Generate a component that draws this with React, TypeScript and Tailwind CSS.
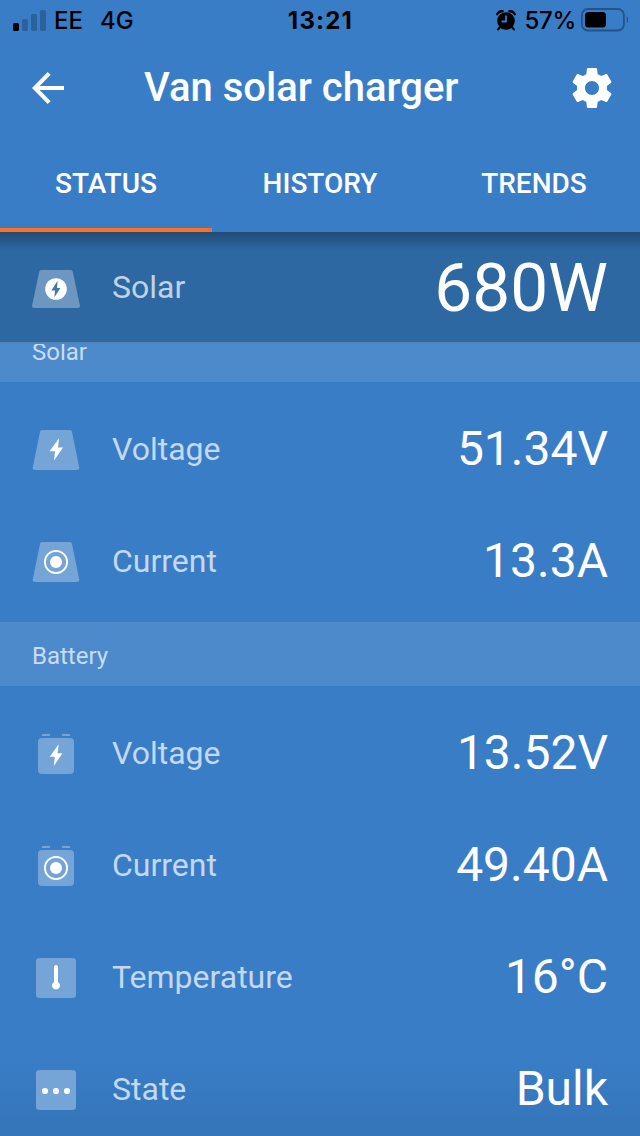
import type { ReactNode } from "react"

const tabs = ["STATUS", "HISTORY", "TRENDS"]

function PanelIcon({ children }: { children: ReactNode }) {
  return (
    <svg viewBox="0 0 48 48" className="h-12 w-12" aria-hidden="true">
      <path
        d="M10.2 4h27.6a2.2 2.2 0 0 1 2.2 1.8l7.2 35.4a2.4 2.4 0 0 1-2.3 2.8H3.1a2.4 2.4 0 0 1-2.3-2.8L8 5.8A2.2 2.2 0 0 1 10.2 4Z"
        fill="#75a5d7"
      />
      {children}
    </svg>
  )
}

function BatteryIcon({ children }: { children: ReactNode }) {
  return (
    <svg viewBox="0 0 48 48" className="h-12 w-12" aria-hidden="true">
      <path d="M10 4h8v2h-8zM30 4h8v2h-8z" fill="#75a5d7" />
      <rect x="6" y="8" width="36" height="36" rx="4" fill="#75a5d7" />
      {children}
    </svg>
  )
}

function SquareIcon({ children }: { children: ReactNode }) {
  return (
    <svg viewBox="0 0 48 48" className="h-12 w-12" aria-hidden="true">
      <rect x="4" y="4" width="40" height="40" rx="3.5" fill="#75a5d7" />
      {children}
    </svg>
  )
}

function Target({ cy }: { cy: number }) {
  return (
    <>
      <circle cx="24" cy={cy} r="11.1" fill="none" stroke="#fff" strokeWidth="1.8" />
      <circle cx="24" cy={cy} r="6" fill="#fff" />
    </>
  )
}

const solarRows = [
  {
    label: "Voltage",
    value: "51.34V",
    icon: (
      <PanelIcon>
        <path d="M27 12.2 17.6 25.2H23L22 34.4 31 21.4H26Z" fill="#fff" />
      </PanelIcon>
    ),
  },
  {
    label: "Current",
    value: "13.3A",
    icon: (
      <PanelIcon>
        <Target cy={24} />
      </PanelIcon>
    ),
  },
]

const batteryRows = [
  {
    label: "Voltage",
    value: "13.52V",
    icon: (
      <BatteryIcon>
        <path d="M26.6 14.2 17.8 26.8H22.8L21.8 36 30.4 23.2H25.6Z" fill="#fff" />
      </BatteryIcon>
    ),
  },
  {
    label: "Current",
    value: "49.40A",
    icon: (
      <BatteryIcon>
        <Target cy={26} />
      </BatteryIcon>
    ),
  },
  {
    label: "Temperature",
    value: "16°C",
    icon: (
      <SquareIcon>
        <path d="M22 13a2 2 0 0 1 4 0v15a4 4 0 1 1-4 0Z" fill="#fff" />
      </SquareIcon>
    ),
  },
  {
    label: "State",
    value: "Bulk",
    icon: (
      <SquareIcon>
        <circle cx="13" cy="25" r="3.1" fill="#fff" />
        <circle cx="24" cy="25" r="3.1" fill="#fff" />
        <circle cx="35" cy="25" r="3.1" fill="#fff" />
      </SquareIcon>
    ),
  },
]

function Row({ label, value, icon }: { label: string; value: string; icon: ReactNode }) {
  return (
    <div className="flex h-28 items-center px-8 pt-1.5">
      <div className="pt-0.5">{icon}</div>
      <span className="ml-8 flex-1 text-[32px] text-[#c4d8ef]">{label}</span>
      <span className="text-5xl text-white">{value}</span>
    </div>
  )
}

function StatusBar() {
  return (
    <div className="flex h-10 shrink-0 items-center justify-between pr-3 pl-[13px] font-['Inter',sans-serif] text-black">
      <div className="flex w-[200px] items-center">
        <svg viewBox="0 0 33 21" className="h-[21px] w-[33px]" aria-hidden="true">
          <rect x="0" y="13" width="6" height="8" rx="1.5" />
          <rect x="9" y="9" width="6" height="12" rx="1.5" fill="#2c619b" />
          <rect x="18" y="4" width="6" height="17" rx="1.5" fill="#2c619b" />
          <rect x="27" y="0" width="6" height="21" rx="1.5" fill="#2c619b" />
        </svg>
        <span className="ml-2 pt-0.5 text-2xl font-medium">EE</span>
        <span className="ml-[17px] pt-0.5 text-2xl font-medium">4G</span>
      </div>
      <span className="pt-0.5 text-2xl font-bold tracking-[1.2px]">13:21</span>
      <div className="flex w-[200px] items-center justify-end">
        <svg viewBox="0 0 20 21" className="h-[21px] w-5" aria-hidden="true">
          <circle cx="10" cy="11" r="8.8" />
          <path d="M4.5 16.5 2 19.5M15.5 16.5l2.5 3" stroke="#000" strokeWidth="2" strokeLinecap="round" />
          <path d="M1.2 4.2Q3 .9 6.6 1.2M18.8 4.2Q17 .9 13.4 1.2" fill="none" stroke="#000" strokeWidth="2.4" strokeLinecap="round" />
          <path d="M10 5.5V11.5H5.5" fill="none" stroke="#397dc6" strokeWidth="1.8" />
        </svg>
        <span className="ml-[9px] pt-0.5 text-2xl font-medium tracking-[-0.3px]">57%</span>
        <svg viewBox="0 0 48 24" className="ml-1 h-6 w-12" aria-hidden="true">
          <rect x="1.9" y="1" width="42" height="21.5" rx="6" fill="none" stroke="#265383" strokeWidth="1.8" />
          <rect x="5" y="4" width="21" height="15.5" rx="3.5" />
          <path d="M46.8 8.5q1.8 1 1.8 3.3T46.8 15Z" fill="#265383" />
        </svg>
      </div>
    </div>
  )
}

export default function App() {
  return (
    <div className="flex h-[1136px] w-[640px] flex-col overflow-hidden bg-[#397dc6] bg-linear-to-b from-[#397dc6] from-[93.5%] to-[#3474b8] font-['Roboto',sans-serif] leading-none">
      <StatusBar />

      <header className="flex h-24 shrink-0 items-center px-8 text-white">
        <svg viewBox="0 0 32 32" className="h-8 w-8" aria-hidden="true">
          <path d="M32 16H3M17.2 1.4 2.8 16l14.4 14.6" fill="none" stroke="currentColor" strokeWidth="4" />
        </svg>
        <h1 className="ml-20 flex-1 text-[40px] font-medium">Van solar charger</h1>
        <svg viewBox="2 2 20 20" className="-mr-1 h-10 w-10" aria-hidden="true">
          <path
            fill="currentColor"
            d="M19.43 12.98c.04-.32.07-.64.07-.98s-.03-.66-.07-.98l2.11-1.65c.19-.15.24-.42.12-.64l-2-3.46c-.12-.22-.39-.3-.61-.22l-2.49 1c-.52-.4-1.08-.73-1.69-.98l-.38-2.65C14.46 2.18 14.25 2 14 2h-4c-.25 0-.46.18-.49.42l-.38 2.65c-.61.25-1.17.59-1.69.98l-2.49-1c-.23-.09-.49 0-.61.22l-2 3.46c-.13.22-.07.49.12.64l2.11 1.65c-.04.32-.07.65-.07.98s.03.66.07.98l-2.11 1.65c-.19.15-.24.42-.12.64l2 3.46c.12.22.39.3.61.22l2.49-1c.52.4 1.08.73 1.69.98l.38 2.65c.03.24.24.42.49.42h4c.25 0 .46-.18.49-.42l.38-2.65c.61-.25 1.17-.59 1.69-.98l2.49 1c.23.09.49 0 .61-.22l2-3.46c.12-.22.07-.49-.12-.64l-2.11-1.65zM12 15.5c-1.93 0-3.5-1.57-3.5-3.5s1.57-3.5 3.5-3.5 3.5 1.57 3.5 3.5-1.57 3.5-3.5 3.5z"
          />
        </svg>
      </header>

      <nav className="grid h-24 shrink-0 grid-cols-[212px_216px_212px] text-[28px] font-medium text-white">
        {tabs.map((tab, i) => (
          <div
            key={tab}
            className={
              i === 0
                ? "flex items-center justify-center border-b-4 border-[#ff7226] pt-1"
                : "flex items-center justify-center border-b-4 border-transparent pt-1"
            }
          >
            {tab}
          </div>
        ))}
      </nav>

      {/* Pinned summary */}
      <div className="flex h-[112px] shrink-0 items-center border-b-2 border-[#5584b4] bg-[#2d68a3] bg-linear-to-b from-[#234b75] to-[#2d68a3] to-[18px] px-8">
        <svg viewBox="0 0 48 38" className="mt-1 h-[38px] w-12" aria-hidden="true">
          <path
            d="M9.4 0h29.2a2.2 2.2 0 0 1 2.2 1.8l7.1 33.6a2.2 2.2 0 0 1-2.1 2.6H2.2a2.2 2.2 0 0 1-2.1-2.6L7.2 1.8A2.2 2.2 0 0 1 9.4 0Z"
            fill="#6d97c1"
          />
          <circle cx="24" cy="19" r="10.8" fill="#fff" />
          <path d="M25.6 10.8 19.4 20.4h3.6L22.4 27.2 28.4 18h-3.4Z" fill="#4377aa" />
        </svg>
        <span className="ml-8 flex-1 text-[32px] text-[#c0d2e3]">Solar</span>
        <span className="pt-0.5 text-[67.5px] text-white">680W</span>
      </div>

      {/* Section heading scrolled partly under the summary */}
      <div className="flex h-[38px] shrink-0 items-end overflow-hidden bg-[#4c8acb] px-8 pb-3.5 text-2xl text-[#c9dcf0]">
        Solar
      </div>
      <div className="shrink-0 py-2">
        {solarRows.map((row) => (
          <Row key={row.label} {...row} />
        ))}
      </div>

      <div className="flex h-16 shrink-0 items-center bg-[#4c8acb] px-8 pt-1 text-2xl text-[#c9dcf0]">
        Battery
      </div>
      <div className="shrink-0 py-2">
        {batteryRows.map((row) => (
          <Row key={row.label} {...row} />
        ))}
      </div>
    </div>
  )
}
